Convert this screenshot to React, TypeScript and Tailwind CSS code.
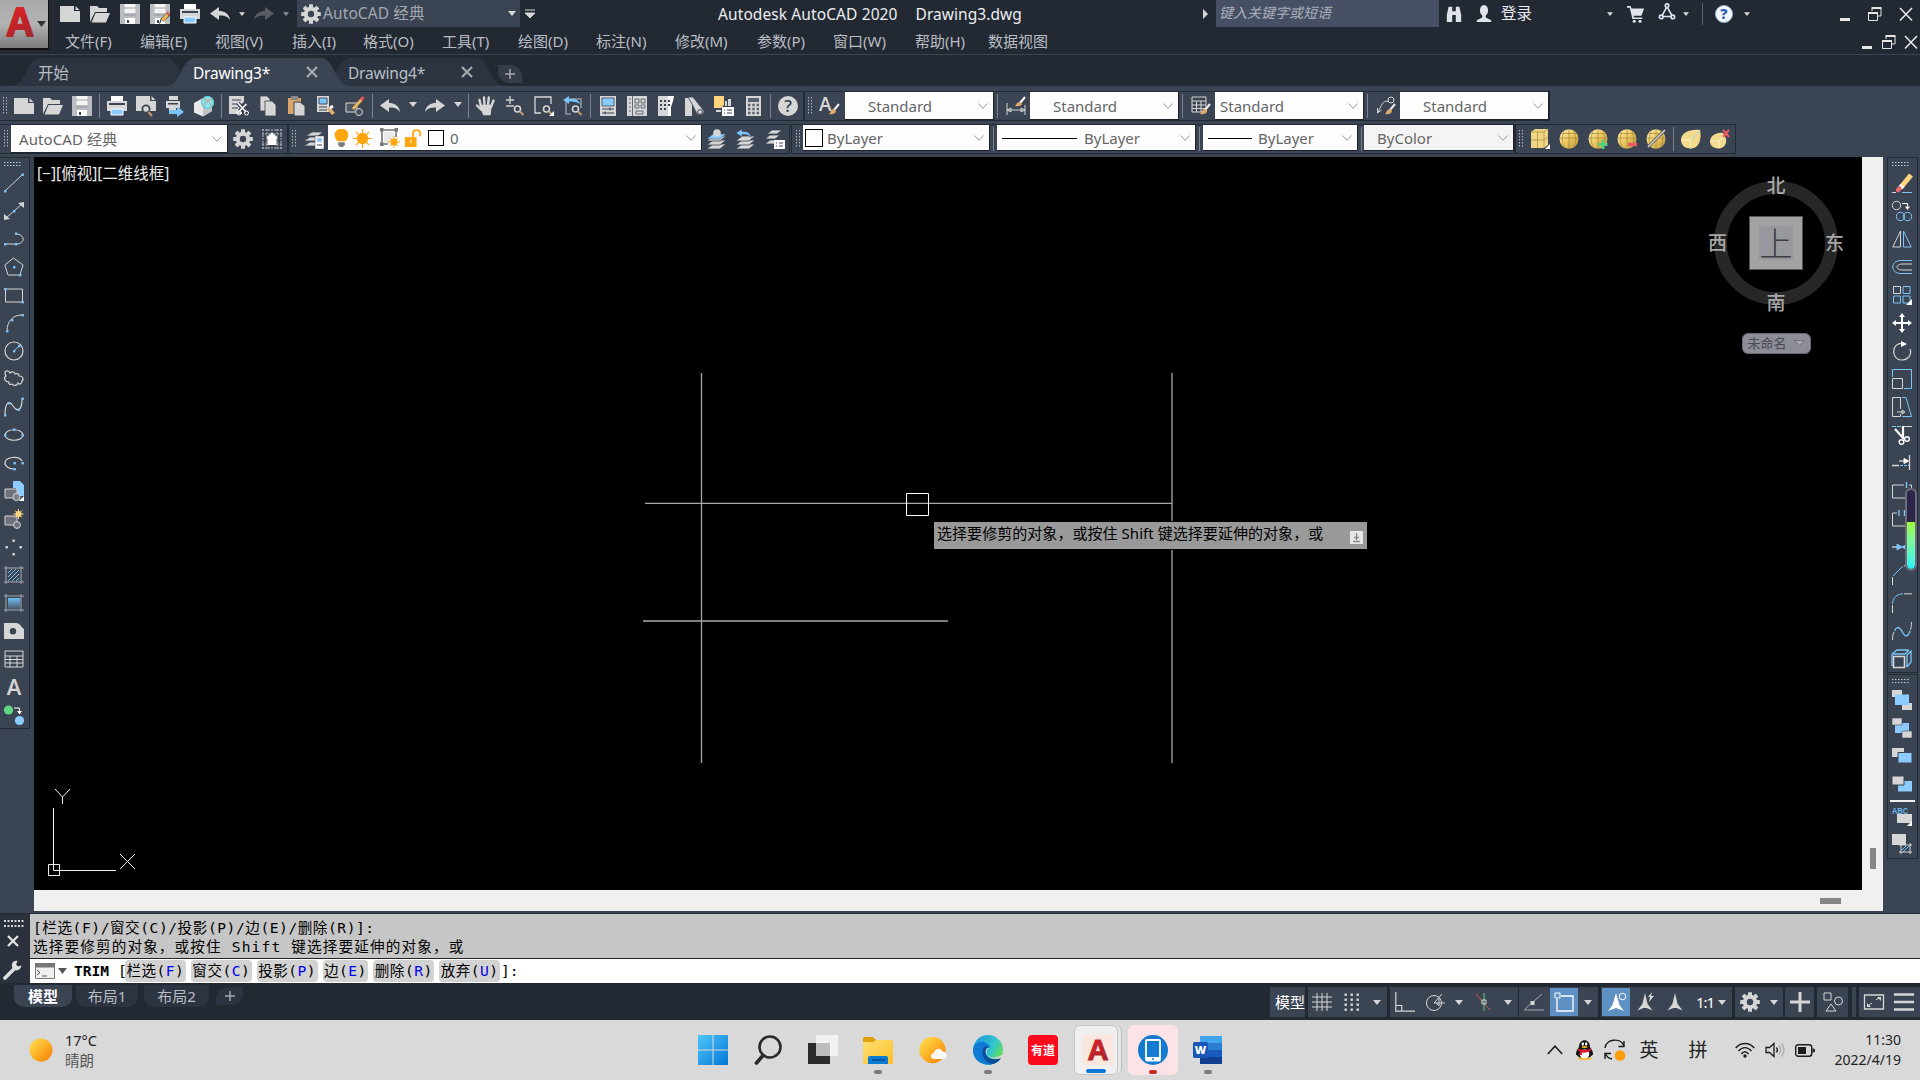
import type { ReactNode } from "react";
import clsx from "clsx";

const G = "#d6d6d6";
const B = "#7cc5fb";
const O = "#ffa60d";
const DARK = "#3b4453";

const dot = (x: number, y: number, c = B) => <rect x={x - 1} y={y - 1} width="2.4" height="2.4" fill={c} stroke="none" />;

const brush = (
  <g stroke="none">
    <path d="M19 8l-5 6" stroke="#eee" strokeWidth="2" />
    <path d="M14 13c-3 0-3 3-5 5 4 1 7-1 7-3z" fill="#e2a96b" />
  </g>
);

const gearTeeth = [0, 45, 90, 135, 180, 225, 270, 315];

const gear = (
  <g stroke="none" fill={G}>
    {gearTeeth.map((a) => (
      <rect key={a} x="8" y="0.2" width="4" height="5" rx="0.6" transform={`rotate(${a} 10 10)`} />
    ))}
    <circle cx="10" cy="10" r="5.2" fill="none" stroke={G} strokeWidth="4" />
  </g>
);

const globe = (
  <g>
    <ellipse cx="10" cy="10" rx="9.5" ry="9.8" fill="url(#gold)" stroke="none" />
    <path d="M10 .5v19M1 9h18M5 2.500c-2.500 5-2.500 10 0 15M15 2.500c2.500 5 2.500 10 0 15M3 4.500h14" stroke="#9a7c2c" strokeWidth="0.6" />
  </g>
);

const layers = (
  <g fill={G} stroke={DARK} strokeWidth="0.8">
    <path d="M0 20h13l6-5H6z" />
    <path d="M0 16h13l6-5H6z" />
    <path d="M0 12h13l6-5H6z" />
  </g>
);

const person = <path d="M10 1l3.500 12 4.500 6-8-3-8 3 4.500-6z" fill="#fff" stroke="none" />;

const annoBody = <path d="M10 1l2.600 11 5 6.500-6-2.500h-3.200l-6 2.500 5-6.500z" fill={G} stroke="none" />;

const printer = (
  <g stroke="none">
    <path d="M4 0h12v6H4z" fill="#fff" />
    <path d="M0 5h20v10H0z" fill={G} />
    <path d="M2 7h16v2H2z" fill={DARK} />
    <path d="M4 13h12v6H4z" fill="#8bcbff" stroke="#fff" />
  </g>
);

const floppy = (
  <g stroke="none">
    <path d="M0 0h20v20H0z" fill="#b9bcc0" />
    <path d="M4.500 0h11v9h-11z" fill="#f4f4f4" />
    <path d="M4 4h12M4 11h12" stroke="#8d9197" strokeWidth="0.8" />
    <path d="M5 14h10v6H5z" fill="#fff" />
    <path d="M7 16h2v3H7z" fill={DARK} />
  </g>
);

const zoomLens = (
  <g>
    <circle cx="12.500" cy="13" r="3" strokeWidth="1.600" />
    <path d="M15 15.500l3.500 3.500" stroke="#c89b6a" strokeWidth="2" />
  </g>
);

const hatchFrame = <path d="M2 1v18M17 1v18M0 3h20M0 17h20" stroke="#a6aab0" />;

const icons: Record<string, ReactNode> = {
  new: <path d="M0 2h14v5h6v11H0zM15.500 2l4 4h-4z" fill={G} stroke="none" />,
  open: <path d="M0 18V2h7l2 2h8v4H5zM5.500 9H20l-4 9.500H1.500z" fill={G} stroke="none" />,
  save: floppy,
  saveAs: (
    <g>
      {floppy}
      <path d="M9 20l1.500-5 7-7 3 3-7 7z" fill={DARK} stroke="none" />
      <path d="M10 20l1.500-4 3 2.500z" fill="#fff" stroke="none" />
      <path d="M12.500 16.500l5-6" stroke="#f0b44e" strokeWidth="3.500" />
      <path d="M17.500 10.500l1.500-1.600" stroke="#e0525c" strokeWidth="3.500" />
    </g>
  ),
  print: printer,
  preview: (
    <g>
      <path d="M0 0h14v5h6v10H0zM15.500 0l4 4h-4z" fill={G} stroke="none" />
      <circle cx="10" cy="13" r="3.600" fill={G} stroke={DARK} strokeWidth="1.800" />
      <path d="M12.500 16l3.500 4" stroke="#c89b6a" strokeWidth="2" />
    </g>
  ),
  publish: (
    <g stroke="none">
      <path d="M4 0h9v4H4zM1 5h14v7H1zM4 12h7v4H4z" fill={G} />
      <path d="M3 7h10v1.500H3z" fill={DARK} />
      <path d="M4 14h8v-3.500l7 5.500-7 5v-3H4z" fill="#7cc5fb" />
    </g>
  ),
  print3d: (
    <g stroke="none">
      <path d="M0 7l9-5 9 4v9l-9 5.500-9-4z" fill="#e9e9e9" />
      <path d="M9 11l9-5v9l-9 5.500z" fill="#bfc3c6" />
      <circle cx="13.500" cy="6.500" r="6.500" fill="#7fe6ec" />
      <path d="M8.500 3c5 0 9 4 9 9M18.500 3c-5 1-9 5-9 9" stroke="#f08a7a" />
      <circle cx="13.500" cy="6.500" r="6" stroke="#5bc7d0" fill="none" />
    </g>
  ),
  cut: (
    <g>
      <path d="M0 0h15v6l-5 4 3 4v4H0z" fill={G} stroke="none" />
      <path d="M3 4h9M3 8h6M3 12h6" stroke={DARK} />
      <path d="M9 7l8 9M17.500 8l-7 7" stroke={DARK} strokeWidth="4" />
      <path d="M9 7l8 9M17.500 8l-7 7" stroke="#fff" strokeWidth="1.500" />
      <circle cx="10" cy="17" r="2" stroke="#fff" />
      <circle cx="17.500" cy="17" r="2" stroke="#fff" />
    </g>
  ),
  copy: (
    <g fill={G} stroke={DARK} strokeWidth="0.800">
      <path d="M2 0h7l3 3v12H2z" />
      <path d="M7 5h7l4 4v11H7z" />
    </g>
  ),
  paste: (
    <g stroke="none">
      <path d="M1 2h13v16H1z" fill="#d9a566" />
      <path d="M4 0h7v4H4z" fill="#8a8a8a" />
      <path d="M7 6h6l5 4v10H7z" fill={G} stroke={DARK} />
    </g>
  ),
  match: (
    <g stroke="none">
      <path d="M1 0h12v16H1z" fill={G} />
      <path d="M3 2h8v6H3z" fill={B} stroke="#334" strokeWidth="0.800" />
      <path d="M3 11h8M3 14h8" stroke={DARK} />
      <path d="M11 13l3-2 5 6-3 2z" fill="#e5b36d" />
      <path d="M14 12l3-2" stroke="#fff" strokeWidth="3" />
    </g>
  ),
  blockEdit: (
    <g>
      <path d="M1 7h11v9H1z" fill="#4f5663" />
      <circle cx="14" cy="16" r="3.500" fill="#4a515e" />
      <path d="M8 13l9-10" stroke="#e9b55f" strokeWidth="3" />
      <path d="M16 4l2.500-3" stroke="#e0525c" strokeWidth="3" />
    </g>
  ),
  undo: <path d="M0 9.500L9 3v4c5 0 10 2 11 9-3-4-6-4.500-11-4.500V16z" fill={G} stroke="none" />,
  redo: <path d="M20 9.500L11 3v4C6 7 1 9 0 16c3-4 6-4.500 11-4.500V16z" fill={G} stroke="none" />,
  pan: (
    <g stroke={G} strokeWidth="2.400" strokeLinecap="round">
      <path d="M5 10L3.500 4M8.500 9L8 1.500M12 9l.8-7.500M15 11l2.500-6.500M5.500 14L1 9.500" />
      <path d="M5 10h9.500l-1 8H8z" fill={G} />
    </g>
  ),
  zoomRt: (
    <g>
      <path d="M1 4h8M5 0v8M1 10h8" strokeWidth="1.300" />
      {zoomLens}
    </g>
  ),
  zoomWin: (
    <g>
      <path d="M17 8V1H1v16h6" strokeWidth="1.300" />
      {zoomLens}
      <path d="M20 15v5h-5z" fill="#fff" stroke="none" />
    </g>
  ),
  zoomPrev: (
    <g>
      <path d="M3 6v12h5M9 3h9v9" stroke="#8f949c" strokeWidth="1.600" />
      <path d="M0 4l6-4v2.500c6 0 10 1 11 6-3-3-6-3-11-3V8z" fill={B} stroke="none" />
      {zoomLens}
    </g>
  ),
  props: (
    <g stroke="none">
      <path d="M2 0h16v20H2z" fill={G} />
      <path d="M4 2h12v8H4z" fill="#8bcbff" stroke="#3b4453" strokeWidth="0.800" />
      <path d="M4 13h12M4 17h12M12 11.500v3M7 15.500v3" stroke={DARK} />
    </g>
  ),
  design: (
    <g>
      <path d="M0 0h20v20H0z" fill={G} stroke="none" />
      <path d="M5.500 0v20M2 3h2M2 7h2M2 11h2M2 15h2M8 3h4v4H8zM14 3h4v4h-4zM8 9h4v3H8zM14 9h4v3h-4zM9 15h7v3H9z" stroke="#5a6270" strokeWidth="0.900" />
    </g>
  ),
  palettes: (
    <g stroke="none">
      <path d="M2 0h10v20H2z" fill={G} />
      <path d="M12 0h6l-1 5-2 6v9h-3z" fill="#fff" />
      <path d="M4 4h2v2H4zM8 4h2v2H8zM4 8h2v2H4zM8 8h2v2H8zM4 12h2v2H4zM8 12h2v2H8zM12 4h2v2h-2zM12 8h2v2h-2z" fill={DARK} />
    </g>
  ),
  sheet: (
    <g stroke="none">
      <path d="M0 2h7v18H0z" fill={G} />
      <path d="M3 1h5l11 14c0 4-5 5-7 3L7 8z" fill={G} stroke={DARK} strokeWidth="0.800" />
      <circle cx="15" cy="16" r="2.400" stroke={DARK} />
    </g>
  ),
  markup: (
    <g stroke="none">
      <path d="M0 0h10v9l-3 3H0z" fill="#ffd57e" />
      <path d="M11 5h2v5h-2zM14 3h3v7h-3z" fill={G} />
      <path d="M8 11h12v9H8z" fill="#fff" />
      <path d="M10 14h1M10 17h1M13 14h5M13 17h5" stroke={DARK} />
      <path d="M2 14h5v2H2z" fill={G} />
    </g>
  ),
  calc: (
    <g stroke="none">
      <path d="M3 0h15v20H3z" fill={G} />
      <path d="M5 2h11v4H5z" fill="#5a6270" />
      <path d="M5 9h11M5 13h11M5 17h11" stroke="#5a6270" strokeWidth="2.500" strokeDasharray="2.400 1.900" />
    </g>
  ),
  help: (
    <g>
      <circle cx="10" cy="10" r="10" fill={G} stroke="none" />
      <text x="10" y="16" textAnchor="middle" fontSize="17" fontFamily="Open Sans, sans-serif" fontWeight="600" fill={DARK} stroke="none">?</text>
    </g>
  ),
  textStyle: (
    <g>
      <text x="-1" y="15" fontSize="19" fontFamily="Open Sans, sans-serif" fontWeight="600" fill={G} stroke="none">A</text>
      {brush}
    </g>
  ),
  dimStyle: (
    <g>
      <path d="M1 7v12M19 9v10M1 14h18M1 14l4-2v4zM19 14l-4-2v4z" />
      <path d="M19 1l-5 6" stroke="#fff" strokeWidth="2" />
      <path d="M14 6c-3 0-4 3-5 4 4 1 7-1 7-2z" fill="#e2a96b" stroke="none" />
    </g>
  ),
  tableStyle: (
    <g>
      <path d="M1 1h14v15H1zM1 5h14M1 9h14M1 12.500h14M5.500 5v11M10 5v11" />
      {brush}
    </g>
  ),
  leaderStyle: (
    <g>
      <circle cx="15" cy="4" r="3" />
      <path d="M12 5c-6 0-6 4-10 11M1.500 17v-5M1.500 17l4-3" />
      {brush}
    </g>
  ),
  gear,
  wsGrid: (
    <g>
      <path d="M1 0v20M5 0v20M15 0v20M19 0v20M0 1h20M0 5h20M0 15h20M0 19h20" stroke="#b4b8be" strokeDasharray="2 1" />
      <path d="M10 3l6 6h-1.500v7h-9V9H4z" fill="#fff" stroke="none" />
    </g>
  ),
  layerProps: (
    <g>
      <g fill={G} stroke={DARK} strokeWidth="0.800">
        <path d="M0 17h12l5-4H6zM0 12h12l5-4H6zM2 7h12l5-4H8z" />
      </g>
      <path d="M11 7h9v13h-9z" fill="#fff" stroke={DARK} strokeWidth="0.500" />
      <path d="M13 9h5v4h-5z" fill={B} />
      <path d="M13 16h5" stroke={DARK} />
    </g>
  ),
  bulb: (
    <g stroke="none">
      <path d="M10 0c9 0 8.500 9 4 13H6C1.500 9 1 0 10 0z" fill={O} />
      <path d="M6.500 14h7v3l-2 2h-3l-2-2z" fill="#7d7d7d" />
    </g>
  ),
  sun: (
    <g>
      <circle cx="10" cy="10" r="6" fill={O} stroke="none" />
      <path d="M10 0v20M0 10h20M3 3l14 14M17 3L3 17" stroke={O} strokeWidth="1.300" />
    </g>
  ),
  vpFreeze: (
    <g>
      <path d="M2 2h14v7M2 2v14h6" stroke="#777" strokeWidth="1.600" />
      <path d="M0 0h3.500v3.500H0zM14.500 0H18v3.500h-3.500zM0 14.500h3.500V18H0z" fill="#777" stroke="none" />
      <path d="M4 4h10v5l-6 6H4z" fill="#e8e8e8" stroke="none" />
      <circle cx="14" cy="14" r="3.500" fill={O} stroke="none" />
      <path d="M14 8v12M8 14h12M10 10l8 8M18 10l-8 8" stroke={O} />
    </g>
  ),
  unlock: (
    <g>
      <path d="M10 9V5c0-5 8-5 8 0v3" stroke={O} strokeWidth="2" />
      <path d="M1 9h13v11H1z" fill={O} stroke="none" />
      <path d="M7.500 12v4" stroke="#fff" />
    </g>
  ),
  layerCurrent: (
    <g>
      {layers}
      <path d="M0 10h13l6-5H6z" fill="#8bcbff" stroke={DARK} strokeWidth="0.500" />
      <circle cx="10" cy="4" r="3.800" fill={G} stroke="none" />
    </g>
  ),
  layerPrev: (
    <g>
      {layers}
      <path d="M0 4l6-4v2.500c6 0 8 1 9 6-3-3-4-3-9-3V8z" fill={B} stroke={DARK} strokeWidth="0.500" />
    </g>
  ),
  layerState: (
    <g>
      <g fill={G} stroke={DARK} strokeWidth="0.800">
        <path d="M0 15h10l5-4H5zM0 10h10l5-4H5zM2 5h10l5-4H7z" />
      </g>
      <path d="M9 11h11v9H9z" fill="#fff" stroke="none" />
      <path d="M11 14h1M11 17h1M14 14h4M14 17h4" stroke={DARK} />
    </g>
  ),
  goldBox: (
    <g>
      <path d="M1 3l4-3h13v16l-4 3H1z" fill="#efd684" stroke="none" />
      <path d="M1 3h13l4-3M14 3v16M7.500 3v16M1 11h13l4-3" stroke="#a98a3c" strokeWidth="0.700" />
      <path d="M20 15v5h-5z" fill="#fff" stroke="none" />
    </g>
  ),
  goldGlobe: globe,
  goldPlus: (
    <g>
      {globe}
      <path d="M15 11v9M10.500 15.500h9" stroke="#4fd07c" strokeWidth="2.800" />
    </g>
  ),
  goldMinus: (
    <g>
      {globe}
      <path d="M11 15.500h9" stroke="#ee5c63" strokeWidth="3.400" />
    </g>
  ),
  goldSlash: (
    <g>
      {globe}
      <path d="M2 18L19 1" stroke="#555" strokeWidth="3" />
      <path d="M2 18L19 1" stroke="#cfcfcf" strokeWidth="1.400" />
    </g>
  ),
  goldCut: (
    <g>
      <path d="M0 11C0 4 8 0 19 1c2 9-1 18.500-9 18.500C4 19.500 0 16 0 11z" fill="#f3da8c" stroke="none" />
      <path d="M9.500 11L19 1M9.500 11v8.500M0 11h9.500" stroke="#fdf3cd" />
      <path d="M10 11l9-9.500" stroke="#7fc4d8" strokeWidth="0.700" />
    </g>
  ),
  goldCutX: (
    <g>
      <path d="M0 12.500C0 7 6 3 13 4c7 9 1 15.500-4 15.500C4 19.500 0 17 0 12.500z" fill="#f3da8c" stroke="none" />
      <path d="M0 12h9l5-6M9 12v7" stroke="#fdf3cd" />
      <path d="M13 1l6 7M19 1l-6 7" stroke="#ee5c63" strokeWidth="2" />
    </g>
  ),

  // draw
  line: <g><path d="M1.500 17.500L18 2" />{dot(1, 18)}{dot(18.500, 1.500)}</g>,
  xline: <g><path d="M2 17L18 3" /><path d="M0 19v-6l6 5zM20 1v6l-6-5z" fill={G} stroke="none" />{dot(10, 10)}</g>,
  pline: <g><path d="M1 15h11c10 0 9-10 0-10" />{dot(1, 15)}{dot(12, 15)}{dot(12, 4.500)}</g>,
  polygon: <g><path d="M9.500 1L19 8l-3 10H4L.8 8z" />{dot(10, 10)}{dot(16, 18)}</g>,
  rect: <g><path d="M1.500 4h17v13h-17z" />{dot(1, 4)}{dot(18.500, 17)}</g>,
  arc: <g><path d="M3 18C3 8 9 2 18 2" />{dot(3, 18)}{dot(8, 7)}{dot(18.500, 2)}</g>,
  circle: <g><circle cx="10" cy="10" r="9" strokeWidth="1.200" /><path d="M10 10l5-5" stroke={B} />{dot(10, 10)}{dot(15, 5)}</g>,
  cloud: <path d="M1 3c2-2 4-1 5 1 2-2 5-1 5 1 3-1 4 0 4 2 4 0 5 3 3 5 0 3-3 4-4 2-1 3-5 3-6 1-2 1-4 0-3-2-4 0-6-4-3-6-1-1-1-2-1-4z" strokeWidth="1.200" />,
  spline: <g><path d="M1 18C1 8 4 1 9 9c5 7 9 4 9-7" strokeWidth="1.200" />{dot(1, 18)}{dot(5, 6)}{dot(14.500, 12.500)}{dot(18.500, 1.500)}</g>,
  ellipse: <g><ellipse cx="10" cy="10" rx="9" ry="5.200" strokeWidth="1.100" />{dot(10, 4.500)}{dot(1, 10)}{dot(18.500, 10)}</g>,
  ellipseArc: <g><path d="M18 8c-3-6-17-4-17 2 0 4 5 6 9 6" strokeWidth="1.200" />{dot(10.500, 10)}{dot(18.500, 10)}{dot(10.500, 16)}</g>,
  insert: (
    <g>
      <path d="M9 0h7l4 4v11h-8V7H9z" fill="#8bcbff" stroke="none" />
      <path d="M1 8h12v9H1z" fill="#6d717b" />
      <circle cx="12.500" cy="16" r="3.600" fill="#7d818b" />
      <path d="M20 15v5h-5z" fill="#fff" stroke="none" />
    </g>
  ),
  block: (
    <g>
      <path d="M1 7h12v9H1z" fill="#6d717b" />
      <circle cx="13" cy="16" r="3.400" fill="#6d717b" />
      <circle cx="14.500" cy="5" r="3" fill="#ffd57e" stroke="none" />
      <path d="M14.500 0v10M9.500 5h10M11 1.500l7 7M18 1.500l-7 7" stroke="#ffd57e" />
    </g>
  ),
  point: <g>{dot(9.500, 3.500, G)}{dot(2.500, 10, G)}{dot(16.500, 10, G)}{dot(9.500, 17, G)}</g>,
  hatch: <g>{hatchFrame}<path d="M4 8l4-4M4 12l8-8M4 16L15 5M8 16l7-7M12 16l3-3" stroke={B} /></g>,
  gradient: <g>{hatchFrame}<path d="M4 5h12v11H4z" fill="url(#fade)" stroke="none" /></g>,
  region: <path fillRule="evenodd" d="M0 2h12c4 0 5 4 8 6v10H0zM9 7a3.200 3.200 0 100 6.400A3.200 3.200 0 009 7z" fill={G} stroke="none" />,
  table: <path d="M1 2h18v16H1zM1 7h18M1 10.500h18M1 14h18M6 7v11M13 7v11" />,
  mtext: <text x="10" y="18" textAnchor="middle" fontSize="22" fontFamily="Open Sans, sans-serif" fontWeight="600" fill={G} stroke="none">A</text>,
  addSel: (
    <g>
      <circle cx="4.500" cy="5" r="4.600" fill="#5fd884" stroke="none" />
      <circle cx="15.500" cy="15.500" r="4.600" fill="#8bcbff" stroke="none" />
      <path d="M10 3h5.500v3" stroke="#fff" />
      <path d="M13 6h5l-2.500 3.500z" stroke="none" fill="#fff" />
    </g>
  ),

  // modify
  erase: (
    <g>
      <path d="M0 19.500h4" /><path d="M10 19.500h10" stroke={B} />
      <path d="M10 13L19 2" stroke="#ffd57e" strokeWidth="5" />
      <path d="M8 15l2.500-2.500" stroke="#fff" strokeWidth="5" />
      <path d="M6 17l1.500-1.500" stroke="#ee6a72" strokeWidth="4.500" strokeLinecap="round" />
    </g>
  ),
  copyObj: (
    <g>
      <circle cx="4.500" cy="4.500" r="4.200" />
      <path d="M10 2.500h5.500v3" stroke="#fff" />
      <path d="M13 5.500h5l-2.500 3.500z" stroke="none" fill="#fff" />
      <circle cx="8.500" cy="15.500" r="4.200" stroke={B} />
      <circle cx="15.500" cy="15.500" r="4.200" stroke={B} />
    </g>
  ),
  mirror: <g><path d="M8.500 2v16H.8z" /><path d="M11.500 2v16h7.700z" stroke={B} /></g>,
  offset: <g><path d="M20 3.500H9c-11 0-11 13 0 13h11" stroke={B} /><path d="M20 7h-9c-8 0-8 6 0 6h9" /></g>,
  array: (
    <g>
      <path d="M1.500 1.500h7v7h-7z" />
      <path d="M11 1.500h7v7h-7zM1.500 11h7v7h-7zM11 11h7v7h-7z" stroke={B} />
      <path d="M20 14v6h-6z" fill="#fff" stroke="none" />
    </g>
  ),
  move: (
    <g stroke="#fff" strokeWidth="2">
      <path d="M10 2v16M2 10h16" />
      <path d="M10 0l3 4H7zM10 20l3-4H7zM0 10l4-3v6zM20 10l-4-3v6z" fill="#fff" stroke="none" />
    </g>
  ),
  rotate: <g><path d="M11 2.500C-1 1-1 18.500 9 19c8 0 11-6 9-11" strokeWidth="1.200" /><path d="M9 0l6 3-6 3z" fill="#fff" stroke="none" /></g>,
  scale: <g><path d="M.5 8V.5h19v19H12" stroke={B} /><path d="M.5 9.500h10v10H.5z" /></g>,
  stretch: <g><path d="M8.500 12V.5h-8v19h8V17M5 15h7M10 13l3 2-3 2z" /><path d="M10 .5h4l5.500 19H10" stroke={B} /></g>,
  trim: (
    <g>
      <path d="M0 1.500h9" stroke={B} strokeDasharray="4 1" /><path d="M12 1.500h8" />
      <path d="M3 4l9 10M11 1v11" stroke="#fff" strokeWidth="2.200" />
      <circle cx="9.500" cy="17" r="2.300" stroke="#fff" strokeWidth="1.400" />
      <circle cx="15" cy="14" r="2.300" stroke="#fff" strokeWidth="1.400" />
    </g>
  ),
  extend: (
    <g>
      <path d="M0 12.500h7M17.500 2v15" strokeWidth="1.300" /><path d="M8 12.500h9" stroke={B} strokeDasharray="3 1" />
      <path d="M7 8h6M12 5.500l4.500 2.500L12 10.500z" stroke="#fff" fill="#fff" />
    </g>
  ),
  breakPt: <g><path d="M12 4H.5v13h19V4H17" /><path d="M14.500 1v6" stroke={B} strokeWidth="1.400" /></g>,
  breakObj: <g><path d="M5 4H.5v13h19V4H15" /><path d="M7 1v6M12.500 1v6" stroke={B} strokeWidth="1.400" /></g>,
  join: <g><path d="M0 10h5M16 10h4" stroke="#fff" /><path d="M5 7l5 3-5 3zM15 7l-5 3 5 3z" fill={B} stroke={B} /></g>,
  chamfer: <g><path d="M.5 20v-8M12 .8h8" /><path d="M1 11L11 1" stroke={B} /></g>,
  fillet: <g><path d="M.5 20v-8M12 .8h8" /><path d="M.5 11C.5 5 5 .8 11 .8" stroke={B} /></g>,
  blend: <g><path d="M.5 19C.5 15 1 13 2 11M19.500 1c0 4-.5 6-1 8" /><path d="M2.500 10C6 3 9 8 11 12c2 4 5 4 7-2" stroke={B} strokeWidth="1.300" /></g>,
  explode: <g><path d="M1.500 7.500h11v11h-11z" strokeWidth="1.600" /><path d="M0 17V5l5-4h11M1 5h12l4-4M15 18V6l4-4v11l-4 5" stroke={B} strokeWidth="1.300" /></g>,
  front: <g stroke="none"><path d="M0 0h10v7H0zM10 13h10v7H10z" fill={G} /><path d="M3 4.500h14v10.500H3z" fill="#8bcbff" /></g>,
  back: <g stroke="none"><path d="M3 5h14v10H3z" fill="#8bcbff" /><path d="M0 0h10v7H0zM10 13h10v7H10z" fill={G} stroke={DARK} strokeWidth="0.600" /></g>,
  above: <g stroke="none"><path d="M0 2h12v9H0z" fill={G} /><path d="M6 6.500h14v10.500H6z" fill="#8bcbff" stroke={DARK} /></g>,
  under: <g stroke="none"><path d="M6 7h14v10.500H6z" fill="#8bcbff" /><path d="M0 2h12v9H0z" fill={G} stroke={DARK} /></g>,
  textFront: (
    <g stroke="none">
      <path d="M5 8h15v9H5z" fill={G} />
      <text x="0" y="8" textLength="16" lengthAdjust="spacingAndGlyphs" fontSize="9" fontFamily="Liberation Sans, sans-serif" fontWeight="700" fill="#6fb9ee">ABC</text>
      <path d="M20 15v5h-5z" fill="#fff" />
    </g>
  ),
  hatchBack: (
    <g>
      <path d="M0 0h14v11H0z" fill={G} stroke="none" />
      <path d="M9 9v11M18 9v11M7 11h13M7 18h13" />
      <path d="M10 16l4-4M11 18l6-6" stroke={B} />
    </g>
  ),

  // title bar right
  binoculars: <g fill="#dfe3ea" stroke="none"><path d="M4 2h4v5h4V2h4l2 9v8h-6v-8H8v8H2v-8z" /></g>,
  user: <g fill="#dfe3ea" stroke="none"><ellipse cx="10" cy="6" rx="4.500" ry="6" /><path d="M8 11h4v3l6 3v2H2v-2l6-3z" /></g>,
  cart: <g fill="#dfe3ea" stroke="none"><path d="M0 1h4l1 3h14l-3 8H7l1 2h9v1.500H6L3 3H0z" /><circle cx="8" cy="18" r="1.700" /><circle cx="14.500" cy="18" r="1.700" /></g>,
  a360: <g stroke="#dfe3ea" strokeWidth="1.800"><path d="M10 4L4 15h12z" /><circle cx="10" cy="3" r="2" fill="#2b3a6b" /><circle cx="3.500" cy="15.500" r="2" fill="#2b3a6b" /><circle cx="16.500" cy="15.500" r="2" fill="#2b3a6b" /></g>,
  helpBlue: (
    <g>
      <circle cx="10" cy="10" r="9.500" fill="#f4f7fb" stroke="#9db1d0" />
      <text x="10" y="16" textAnchor="middle" fontSize="16" fontFamily="Open Sans, sans-serif" fontWeight="800" fill="#2d5fb4" stroke="none">?</text>
    </g>
  ),
  min: <path d="M5 14h10v3H5z" fill="#e6e6e6" stroke="none" />,
  restore: <g stroke="#e6e6e6"><path d="M7 7V4.500h9V12h-3" /><path d="M6.500 4h10" strokeWidth="2" /><path d="M3.500 9.500h9v7h-9z" /><path d="M3 9h10" strokeWidth="2" /></g>,
  close: <path d="M4 4l12 12.500M16 4L4 16.500" stroke="#e6e6e6" strokeWidth="1.600" />,

  // status bar
  grid: <path d="M5 1v18M10 1v18M15 1v18M0 5h20M0 10h20M0 15h20" />,
  snap: (
    <g stroke="none" fill={G}>
      {[3, 8, 13, 18].map((y) => [3, 9, 15].map((x) => <rect key={`${x}-${y}`} x={x - 0.500} y={y - 1.500} width="2.400" height="2.400" />))}
    </g>
  ),
  ortho: <path d="M.8 0v19.200H20M.8 13.500h6v6" strokeWidth="1.200" />,
  polar: <g><circle cx="9" cy="11" r="7.500" /><path d="M9 11h11M9 11l8-9M14 6v8l-3-3" /></g>,
  iso: <g><path d="M2 2l14 16" stroke="#d05b5b" /><path d="M10 1v18" stroke="#62c583" /><path d="M8 8h4v4H8z" /></g>,
  otrack: <g><path d="M0 18h20M1 17L18 2" stroke="#a6aab0" /><path d="M6.500 9h4v4h-4z" fill={G} stroke="none" /></g>,
  osnap: <g stroke="#fff"><path d="M3 7v12h16V4H7" strokeWidth="1.300" /><path d="M1 1h5v5H1z" /></g>,
  anno1: <g>{person}<circle cx="16.500" cy="4.500" r="3.300" stroke="#fff" /></g>,
  anno2: <g>{annoBody}<path d="M17 0l-4 5h2l-1 5 5-6h-3z" fill={G} stroke="none" /></g>,
  anno3: annoBody,
  plus: <path d="M10 0v20M0 10h20" strokeWidth="3" />,
  isolate: <g><path d="M1 1h7v7H1zM8 12l-5 7h10z" /><circle cx="15.500" cy="9" r="4" /></g>,
  full: <g><path d="M.5 3h19v14H.5z" strokeWidth="1.300" /><path d="M13 5h4v4zM3 15v-4l4 4z" fill={G} stroke="none" /><path d="M12 8l3-2M5 13l3-2" /></g>,
  menu: <path d="M0 2.500h20M0 10h20M0 17.500h20" strokeWidth="2.600" />,
};

function Icon({ name, size = 20, className }: { name: string; size?: number; className?: string }) {
  return (
    <svg width={size} height={size} viewBox="0 0 20 20" fill="none" stroke={G} className={clsx("shrink-0 overflow-visible", className)}>
      {icons[name]}
    </svg>
  );
}

function Caret({ className }: { className?: string }) {
  return (
    <svg width="8" height="5" viewBox="0 0 8 5" className={clsx("shrink-0", className)}>
      <path d="M0 0h8L4 5z" fill={G} />
    </svg>
  );
}

function Slot({ className, children }: { className?: string; children?: ReactNode }) {
  return <div className={clsx("flex shrink-0 items-center justify-center", className)}>{children}</div>;
}

function Grip({ className }: { className?: string }) {
  return (
    <Slot className={className}>
      <svg width="4" height="18" viewBox="0 0 4 18">
        <path d="M.5 0v18M3.500 0v18" stroke="#aeb3bb" strokeDasharray="1.500 1.500" />
      </svg>
    </Slot>
  );
}

function GripH() {
  return (
    <div className="flex h-[11px] shrink-0 items-center pl-1">
      <svg width="17" height="4" viewBox="0 0 17 4">
        <path d="M0 .5h17M0 3.500h17" stroke="#c3c7cd" strokeDasharray="1.500 1.500" />
      </svg>
    </div>
  );
}

function Sep({ className }: { className?: string }) {
  return (
    <Slot className={className}>
      <div className="h-[24px] w-px bg-[#7d838d]" />
    </Slot>
  );
}

function Tools({ names }: { names: string[] }) {
  return (
    <>
      {names.map((n, i) => {
        if (n === "|") return <Sep key={i} className="w-[6px]" />;
        if (n === "v") return <Slot key={i} className="w-4 pb-1 pl-px"><Caret /></Slot>;
        return <Slot key={i} className="w-[29px]"><Icon name={n} /></Slot>;
      })}
    </>
  );
}

function Select({ className, children }: { className?: string; children: ReactNode }) {
  return (
    <div className={clsx("flex shrink-0 items-center border-r border-b border-[#1c222b] pt-px pr-[5px] text-[15px] text-[#666]", className)}>
      {children}
      <svg width="10" height="6" viewBox="0 0 10 6" className="ml-auto shrink-0">
        <path d="M.5.5L5 5.300 9.500.5" fill="none" stroke="#999" />
      </svg>
    </div>
  );
}

const menus = [
  { label: "文件(F)", w: "w-[75px]" },
  { label: "编辑(E)", w: "w-[75px]" },
  { label: "视图(V)", w: "w-[77px]" },
  { label: "插入(I)", w: "w-[71px]" },
  { label: "格式(O)", w: "w-[79px]" },
  { label: "工具(T)", w: "w-[76px]" },
  { label: "绘图(D)", w: "w-[78px]" },
  { label: "标注(N)", w: "w-[79px]" },
  { label: "修改(M)", w: "w-[82px]" },
  { label: "参数(P)", w: "w-[76px]" },
  { label: "窗口(W)", w: "w-[82px]" },
  { label: "帮助(H)", w: "w-[73px]" },
  { label: "数据视图", w: "w-[80px]" },
];

function TitleBar() {
  return (
    <div className="flex h-[55px] border-b border-[#3b4453]">
      <div className="flex h-[50px] w-[49px] shrink-0 items-start border-r border-b-2 border-[#111] bg-linear-to-b from-[#a8a8a8] via-[#b4b4b4] to-[#7c7c7c] pl-1">
        <svg width="32" height="46" viewBox="0 0 32 46" className="overflow-visible">
          <text x="16" y="36.400" textAnchor="middle" textLength="28" lengthAdjust="spacingAndGlyphs" fontSize="40" fontWeight="700" fontFamily="Liberation Sans, sans-serif" fill="url(#red)" stroke="url(#red)" strokeWidth="1.800" strokeLinejoin="round">A</text>
        </svg>
        <svg width="9" height="6" viewBox="0 0 9 6" className="mt-[21px] ml-px shrink-0"><path d="M0 0h9L4.500 6z" fill="#333" /></svg>
      </div>
      <div className="flex flex-1 flex-col">
        <div className="flex h-[27px] items-center">
          <div className="flex pl-[6px]">
            {["new", "open", "save", "saveAs", "print", "undo"].map((n) => (
              <Slot key={n} className="w-[30px]"><Icon name={n} /></Slot>
            ))}
            <Slot className="w-[14px]"><Caret className="h-1 w-1.5" /></Slot>
            <Slot className="w-[30px]"><Icon name="redo" className="opacity-30" /></Slot>
            <Slot className="w-[14px]"><Caret className="h-1 w-1.5 opacity-60" /></Slot>
          </div>
          <div className="ml-[4px] flex h-full w-[223px] items-center bg-[#3b4453] pr-1 pl-[4px] text-[15.500px] text-[#a3a8b0]">
            <Icon name="gear" />
            <span className="ml-[2px] tracking-[0.100px] whitespace-nowrap">AutoCAD 经典</span>
            <Caret className="ml-auto" />
          </div>
          <svg width="10" height="9" viewBox="0 0 10 9" className="ml-[5px]"><path d="M0 1h10M0 4h10L5 9z" fill={G} stroke={G} strokeWidth="1" /></svg>
          <div className="ml-[183px] flex w-[481px] gap-[18px] pt-[3px] text-[15.500px] whitespace-nowrap text-[#eceef0]">
            <span className="tracking-[0.100px]">Autodesk AutoCAD 2020</span>
            <span className="tracking-[0.050px]">Drawing3.dwg</span>
          </div>
          <svg width="5" height="10" viewBox="0 0 5 10" className="ml-[4px]"><path d="M0 0v10l5-5z" fill={G} /></svg>
          <div className="ml-[8px] flex h-full w-[223px] items-center bg-[#464f63] pb-[3px] pl-[3px] text-[14px] text-[#a9afba] italic">键入关键字或短语</div>
          <Slot className="w-[30px]"><Icon name="binoculars" size={18} /></Slot>
          <Slot className="w-[29px]"><Icon name="user" size={18} /></Slot>
          <span className="ml-[3px] w-[106px] text-[15.500px] text-[#e8eaed]">登录</span>
          <Caret className="h-1 w-1.5" />
          <Slot className="ml-[6px] w-[34px]"><Icon name="cart" size={18} /></Slot>
          <Slot className="w-[27px]"><Icon name="a360" size={18} className="-mt-[3px]" /></Slot>
          <Caret className="ml-[3px] h-1 w-1.5" />
          <div className="ml-[13px] h-[22px] w-px bg-[#5b6270]" />
          <Slot className="ml-[5px] w-[32px]"><Icon name="helpBlue" size={18} /></Slot>
          <Caret className="ml-[4px] h-1 w-1.5" />
          <div className="-mr-px ml-auto flex items-center">
            <Slot className="w-[30px]"><Icon name="min" /></Slot>
            <Slot className="w-[30px]"><Icon name="restore" /></Slot>
            <Slot className="w-[31px]"><Icon name="close" /></Slot>
          </div>
        </div>
        <div className="flex h-[27px] items-center pt-[2px] pl-[16px] text-[15px] text-[#b9bdc3]">
          {menus.map((m) => (
            <span key={m.label} className={clsx("shrink-0 whitespace-nowrap", m.w)}>{m.label}</span>
          ))}
          <div className="-mr-[2px] ml-auto flex">
            <Slot className="w-[22px]"><Icon name="min" /></Slot>
            <Slot className="w-[22px]"><Icon name="restore" /></Slot>
            <Slot className="w-[22px]"><Icon name="close" /></Slot>
          </div>
        </div>
      </div>
    </div>
  );
}

function FileTab({ label, active, closable = true }: { label: string; active?: boolean; closable?: boolean }) {
  return (
    <div className={clsx("relative flex h-[28px] w-[155px] shrink-0 items-center justify-between pr-[17px] pl-[13px] text-[15.500px] tracking-[-0.200px]", active ? "z-10 text-white" : "text-[#b9bdc3]")}>
      <svg width="184" height="28" viewBox="-14 0 184 28" className="absolute top-0 -left-[14px]">
        <path d="M-14 28C2 28 0 0 16 0h124c16 0 14 28 30 28z" fill={active ? "#3b4453" : "#2d3441"} />
      </svg>
      <span className="relative pt-[3px]">{label}</span>
      {closable && (
        <svg width="12" height="12" viewBox="0 0 12 12" className="relative">
          <path d="M1 1l10 10M11 1L1 11" stroke="#a5aab2" strokeWidth="2.200" />
        </svg>
      )}
    </div>
  );
}

function FileTabs() {
  return (
    <div className="flex h-[31px] items-end pl-[25px]">
      <FileTab label="开始" closable={false} />
      <FileTab label="Drawing3*" active />
      <FileTab label="Drawing4*" />
      <div className="mb-[3px] ml-[8px] flex h-[18px] w-[24px] items-center justify-center rounded-tr-xl rounded-bl-xl bg-[#343c4a]">
        <Icon name="plus" size={10} className="opacity-70" />
      </div>
    </div>
  );
}

const box = "flex outline outline-[#232a35]";

function Toolbars() {
  return (
    <div className="flex h-[71px] flex-col bg-[#3b4453] pt-[6px]">
      <div className="flex h-[28px] gap-[2px]">
        <div className={clsx(box, "w-[803px]")}>
          <Grip className="w-[9px]" />
          <Tools
            names={[
              "new", "open", "save", "|", "print", "preview", "publish", "print3d", "|", "cut", "copy", "paste", "match", "blockEdit", "|",
              "undo", "v", "redo", "v", "|", "pan", "zoomRt", "zoomWin", "zoomPrev", "|",
              "props", "design", "palettes", "sheet", "markup", "calc", "|", "help",
            ]}
          />
        </div>
        <div className={clsx(box, "w-[744px]")}>
          <Grip className="w-[10px]" />
          <Tools names={["textStyle"]} />
          <Select className="ml-px w-[149px] bg-[#fdfdfd] pl-[23px]">Standard</Select>
          <Sep className="w-[7px]" />
          <Tools names={["dimStyle"]} />
          <Select className="w-[149px] bg-[#fdfdfd] pl-[23px]">Standard</Select>
          <Sep className="w-[7px]" />
          <Tools names={["tableStyle"]} />
          <Select className="w-[149px] bg-[#fdfdfd] pl-[5px]">Standard</Select>
          <Sep className="w-[7px]" />
          <Tools names={["leaderStyle"]} />
          <Select className="w-[149px] bg-[#fdfdfd] pl-[23px]">Standard</Select>
        </div>
      </div>
      <div className="mt-[5px] flex h-[28px]">
        <div className={clsx(box, "w-[287px]")}>
          <Grip className="w-[11px]" />
          <Select className="w-[217px] bg-[#fdfdfd] pl-[8px] tracking-[0.100px]">AutoCAD 经典</Select>
          <Tools names={["gear", "wsGrid"]} />
        </div>
        <div className={clsx(box, "ml-[2px] w-[500px]")}>
          <Grip className="w-[10px]" />
          <Tools names={["layerProps"]} />
          <Select className="h-[26px] w-[374px] bg-[#fdfdfd] pl-[4px]">
            <Icon name="bulb" size={19} />
            <Icon name="sun" size={19} className="ml-[2px]" />
            <Icon name="vpFreeze" className="ml-[8px]" />
            <Icon name="unlock" size={18} className="ml-[4px]" />
            <div className="ml-[6px] h-4 w-4 border border-black bg-white" />
            <span className="ml-[6px]">0</span>
          </Select>
          <Tools names={["layerCurrent", "layerPrev", "layerState"]} />
        </div>
        <div className={clsx(box, "ml-[3px] w-[722px]")}>
          <Grip className="w-[11px]" />
          <Select className="h-[26px] w-[187px] bg-[#fdfdfd] pl-[2px]">
            <div className="mr-[4px] h-[18px] w-[18px] border border-black bg-white" />
            ByLayer
          </Select>
          <Sep className="w-[7px]" />
          <Select className="h-[26px] w-[199px] bg-[#fdfdfd] pl-[5px]">
            <div className="mr-[7px] h-px w-[75px] bg-black" />
            ByLayer
          </Select>
          <Sep className="w-[7px]" />
          <Select className="h-[26px] w-[155px] bg-[#fdfdfd] pl-[5px]">
            <div className="mr-[6px] h-px w-[44px] bg-black" />
            ByLayer
          </Select>
          <Sep className="w-[6px]" />
          <Select className="h-[26px] w-[150px] bg-[#f4f4f4] pl-[13px]">ByColor</Select>
        </div>
        <div className={clsx(box, "ml-[2px] w-[219px]")}>
          <Grip className="w-[9px]" />
          <Tools names={["goldBox", "goldGlobe", "goldPlus", "goldMinus", "goldSlash", "|", "goldCut", "goldCutX"]} />
        </div>
      </div>
    </div>
  );
}

const drawTools = [
  "line", "xline", "pline", "polygon", "rect", "arc", "circle", "cloud", "spline", "ellipse", "ellipseArc",
  "insert", "block", "point", "hatch", "gradient", "region", "table", "mtext", "addSel",
];
const modifyTools = [
  "erase", "copyObj", "mirror", "offset", "array", "move", "rotate", "scale", "stretch", "trim", "extend",
  "breakPt", "breakObj", "join", "chamfer", "fillet", "blend", "explode",
];

function SideTools({ names }: { names: string[] }) {
  return (
    <>
      {names.map((n) => (
        <div key={n} className="flex h-7 shrink-0 items-center pl-1">
          <Icon name={n} />
        </div>
      ))}
    </>
  );
}

function ViewCube() {
  return (
    <div className="absolute top-[18px] right-[12px] flex w-[148px] flex-col items-center font-medium text-[#a8a8a8]">
      <svg width="124" height="124" viewBox="0 0 124 124" className="absolute top-[6px] left-[12px]">
        <circle cx="62" cy="62" r="55.500" fill="none" stroke="#272727" strokeWidth="13" />
      </svg>
      <span className="relative h-[22px] text-[19px] leading-[22px]">北</span>
      <div className="relative mt-[19px] flex w-full items-center justify-between px-[6px]">
        <span className="text-[19px] leading-none">西</span>
        <div className="flex h-[54px] w-[54px] items-center justify-center border border-[#555] bg-[#a3a3a3]">
          <span className="flex h-[34px] w-[34px] items-center justify-center bg-[#97989d] text-[33px] leading-none font-light text-[#3d3d42]">上</span>
        </div>
        <span className="text-[19px] leading-none">东</span>
      </div>
      <span className="relative mt-[22px] h-[22px] text-[19px] leading-[22px]">南</span>
      <div className="mt-[19px] flex h-[21px] w-[69px] items-center justify-between rounded-md border border-[#6d6a75] bg-[#8d8d97] px-[5px] text-[13px] font-normal text-[#4a4a52]">
        未命名
        <svg width="11" height="7" viewBox="0 0 11 7"><path d="M.5.5h10l-5 5.500z" fill="#a5a9b2" stroke="#6f6f78" /></svg>
      </div>
    </div>
  );
}

function Canvas() {
  return (
    <div className="relative h-[733px] w-[1828px] overflow-hidden bg-black">
      <svg width="1828" height="733" viewBox="34 157 1828 733" fill="none" stroke="#a8a8a8" strokeWidth="1.300" className="block">
        <path d="M701.500 373v390M1172 373v390M645 503.300h527M643 621h305" />
        <path d="M906.500 493.500h22v22h-22z" stroke="#fff" strokeWidth="1" />
        <g stroke="#f0f0f0" strokeWidth="1">
          <path d="M53.500 808v62.500H116M48.500 864.500h11v11h-11z" />
          <path d="M55 789l7.500 8 7.500-8M62.500 797v7M120 854l15 15M135 854l-15 15" />
        </g>
      </svg>
      <span className="absolute top-[5px] left-[3px] text-[15.500px] whitespace-nowrap text-[#e8e8e8]">[−][俯视][二维线框]</span>
      <ViewCube />
      <div className="absolute top-[364px] left-[899px] flex h-[29px] w-[435px] items-start justify-between border border-black bg-[#999] pr-[4px] pl-[3px] text-[15px] whitespace-nowrap text-black">
        <span className="tracking-[0.050px]">选择要修剪的对象，或按住 Shift 键选择要延伸的对象，或</span>
        <svg width="13" height="13" viewBox="0 0 13 13" className="mt-[9px]">
          <path d="M0 0h13v13H0z" fill="#e8e8e8" />
          <path d="M6.500 2v7M4 6.500h5M3 10.500h7" stroke="#888" strokeWidth="1.400" />
        </svg>
      </div>
    </div>
  );
}

function Workspace() {
  return (
    <div className="flex h-[756px] bg-[#3b4453]">
      <div className="w-[34px] shrink-0">
        <div className="flex h-[572px] w-[30px] flex-col border border-l-0 border-[#232a35]">
          <GripH />
          <SideTools names={drawTools} />
        </div>
      </div>
      <div className="flex h-[754px] flex-1 flex-col bg-[#f0f0f0]">
        <div className="flex">
          <Canvas />
          <div className="flex flex-1 flex-col items-center">
            <div className="mt-[691px] h-[21px] w-[6px] bg-[#868686]" />
          </div>
        </div>
        <div className="mt-[8px] ml-[1786px] h-[6px] w-[21px] bg-[#868686]" />
      </div>
      <div className="relative w-[37px] shrink-0 pl-[4px]">
        <div className="flex h-[516px] w-[31px] flex-col border border-[#232a35]">
          <GripH />
          <SideTools names={modifyTools} />
        </div>
        <div className="mt-px flex h-[185px] w-[31px] flex-col border border-[#232a35]">
          <GripH />
          <SideTools names={["front", "back", "above", "under"]} />
          <div className="mx-[2px] mt-[2px] h-[2px] shrink-0 bg-[#f0f0f0]" />
          <SideTools names={["textFront", "hatchBack"]} />
        </div>
        <div className="absolute top-[331px] right-[3px] flex h-[83px] w-[12px] flex-col overflow-hidden rounded-full border-2 border-[#6f6d7d] bg-[#2c2748]">
          <div className="mt-[32px] flex-1 rounded-b-full bg-linear-to-b from-[#9dfb30] to-[#22f3f6]" />
        </div>
      </div>
    </div>
  );
}

const options = [
  { label: "栏选", k: "F" },
  { label: "窗交", k: "C" },
  { label: "投影", k: "P" },
  { label: "边", k: "E" },
  { label: "删除", k: "R" },
  { label: "放弃", k: "U" },
];

function CommandLine() {
  return (
    <div className="flex h-[72px] border-t border-b-2 border-[#222933] bg-[#2b313d] font-['DejaVu_Sans_Mono','Noto_Sans_CJK_SC',monospace] text-[14.600px] text-black">
      <div className="flex w-[30px] shrink-0 flex-col pt-[6px]">
        <svg width="21" height="7" viewBox="0 0 21 7" className="ml-1">
          <path d="M0 1h21M0 6h21" stroke="#d6d6d6" strokeWidth="1.800" strokeDasharray="2 1.500" />
        </svg>
        <svg width="12" height="12" viewBox="0 0 12 12" className="mt-[8px] ml-[7px]">
          <path d="M1 1l10 10M11 1L1 11" stroke="#e6e6e6" strokeWidth="2.200" />
        </svg>
        <svg width="20" height="20" viewBox="0 0 20 20" className="mt-[13px] ml-[3px]">
          <path d="M2 18L12 8" stroke="#e0e0e0" strokeWidth="3.600" strokeLinecap="round" />
          <path d="M18.500 5.500l-3.500 1-2-2 1.500-3.500c-4-1-7 3-5 7s8 3 9-2.500z" fill="#e0e0e0" />
        </svg>
      </div>
      <div className="flex flex-1 flex-col">
        <div className="flex h-[45px] flex-col border-b border-[#222] bg-[#c6c6c6] pt-[4px] pl-[3px] leading-[19px] whitespace-nowrap">
          <span className="tracking-[0.550px]">[栏选(F)/窗交(C)/投影(P)/边(E)/删除(R)]:</span>
          <span className="tracking-[1.140px]">选择要修剪的对象，或按住 Shift 键选择要延伸的对象，或</span>
        </div>
        <div className="flex flex-1 items-center bg-white pl-[5px]">
          <svg width="20" height="16" viewBox="0 0 20 16">
            <path d="M.5.5h19v15H.5z" fill="#f0f0f0" stroke="#777" />
            <path d="M0 0h20v4.500H0z" fill="#777" />
            <path d="M2 7l3 2.500L2 12M7 13h5" fill="none" stroke="#555" />
          </svg>
          <svg width="9" height="6" viewBox="0 0 9 6" className="ml-[3px]"><path d="M0 0h9L4.500 6z" fill="#555" /></svg>
          <span className="ml-[7px] w-[45px] font-bold">TRIM</span>
          <span className="w-[6px] -translate-x-px">[</span>
          <div className="flex gap-[5px]">
            {options.map((o) => (
              <span key={o.k} className="flex h-[22px] items-center rounded-[4px] bg-[#d2d2d2] px-[1.500px] tracking-[0.450px]">
                {o.label}(<span className="text-[#0000f0]">{o.k}</span>)
              </span>
            ))}
          </div>
          <span className="ml-px">]:</span>
        </div>
      </div>
    </div>
  );
}

function LayoutTab({ label, active, className }: { label: string; active?: boolean; className?: string }) {
  return (
    <div
      className={clsx(
        "flex h-[22px] items-center justify-center rounded-b-[10px] text-[15px]",
        active ? "bg-[#3b4453] font-bold text-white" : "bg-[#2d3441] text-[#b9bdc3]",
        className,
      )}
    >
      {label}
    </div>
  );
}

const cell = "flex h-[30px] items-center bg-[#3b4453]";

function StatusBar() {
  return (
    <div className="flex h-[35px] bg-[#222933]">
      <div className="flex pl-[14px]">
        <LayoutTab label="模型" active className="w-[58px]" />
        <LayoutTab label="布局1" className="ml-[4px] w-[62px]" />
        <LayoutTab label="布局2" className="ml-[6px] w-[65px]" />
        <div className="mt-[2px] ml-[7px] flex h-[18px] w-[27px] items-center justify-center rounded-tl-xl rounded-br-xl bg-[#2d3441]">
          <Icon name="plus" size={10} className="opacity-70" />
        </div>
      </div>
      <div className="ml-auto flex pt-[2px] text-[15px] text-white">
        <div className={clsx(cell, "w-[35px] justify-end")}>模型</div>
        <div className={clsx(cell, "ml-[3px] w-[79px] pl-[4px]")}>
          <Icon name="grid" />
          <Icon name="snap" className="ml-[10px]" />
          <Caret className="ml-[11px]" />
        </div>
        <div className={clsx(cell, "ml-[3px] w-[128px] pl-[5px]")}>
          <Icon name="ortho" />
          <Icon name="polar" className="ml-[10px]" />
          <Caret className="ml-[10px]" />
          <Icon name="iso" className="ml-[11px]" />
          <Caret className="ml-[10px]" />
        </div>
        <div className={clsx(cell, "ml-px w-[79px] pl-[5px]")}>
          <Icon name="otrack" />
          <Slot className="ml-[6px] h-[28px] w-[28px] bg-[#5e90c3]"><Icon name="osnap" /></Slot>
          <Caret className="ml-[6px]" />
        </div>
        <div className={clsx(cell, "ml-[3px] w-[131px] pl-px")}>
          <Slot className="h-[28px] w-[28px] bg-[#5e90c3]"><Icon name="anno1" /></Slot>
          <Icon name="anno2" className="ml-[5px]" />
          <Icon name="anno3" className="ml-[10px]" />
          <span className="ml-[11px] w-[20px] text-[15px] tracking-[-1px]">1:1</span>
          <Caret className="ml-[2px]" />
        </div>
        <div className={clsx(cell, "ml-[3px] w-[48px] pl-[5px]")}>
          <Icon name="gear" />
          <Caret className="ml-[10px]" />
        </div>
        <div className={clsx(cell, "ml-[2px] w-[29px] justify-center")}><Icon name="plus" /></div>
        <div className={clsx(cell, "ml-[3px] w-[31px] justify-center")}><Icon name="isolate" /></div>
        <div className={clsx(cell, "ml-[4px] w-[4px]")} />
        <div className={clsx(cell, "ml-[3px] w-[61px] gap-[10px] pl-[5px]")}>
          <Icon name="full" />
          <Icon name="menu" />
        </div>
      </div>
    </div>
  );
}

const apps: { id: string; mark?: string; tile?: string; art: ReactNode }[] = [
  {
    id: "start",
    art: <path d="M0 0h14.500v14.500H0zM15.500 0H30v14.500H15.500zM0 15.500h14.500V30H0zM15.500 15.500H30V30H15.500z" fill="url(#win)" />,
  },
  {
    id: "search",
    art: (
      <g fill="none" stroke="#2a2a2a" strokeLinecap="round">
        <circle cx="17" cy="12" r="10.500" strokeWidth="2.600" />
        <path d="M10 20.500L3.500 28" strokeWidth="3.600" />
      </g>
    ),
  },
  {
    id: "taskview",
    art: (
      <g>
        <path d="M0 8h22v21H0z" fill="#2b2b2b" />
        <path d="M8 0h22v21H8z" fill="#f4f4f4" fillOpacity="0.920" />
        <path d="M8 8h14v13H8z" fill="#bcbcbc" />
      </g>
    ),
  },
  {
    id: "explorer",
    mark: "h-[4px] w-[8px] bg-[#7b7b7b]",
    art: (
      <g>
        <path d="M0 3q0-1 1-1h9l3 3h16v6H0z" fill="#e0a007" />
        <path d="M0 7h10l3-2h17v23q0 1-1 1H0z" fill="url(#folder)" />
        <path d="M5 29v-6q0-2 2-2h16q2 0 2 2v6z" fill="#0d7ad4" />
        <path d="M9 25h13" stroke="#0a4b8a" strokeWidth="1.400" />
      </g>
    ),
  },
  {
    id: "weather",
    art: (
      <g>
        <circle cx="14.500" cy="15" r="13.200" fill="url(#sunball)" />
        <path d="M16 24c-4-.5-4-5 0-6 1-5.500 7-5 8.500-1.500 5-.5 6 7 .5 7.500z" fill="#fafafa" />
      </g>
    ),
  },
  {
    id: "edge",
    mark: "h-[4px] w-[8px] bg-[#7b7b7b]",
    art: (
      <g>
        <circle cx="15" cy="15" r="15" fill="url(#edgeA)" />
        <path d="M0 15C1 7 8 5 13 8c4 2 4 4 4 5-3-2-5 1-5 5 1 5 8 8 16 5-4 6-11 8-17 6C4 27 0 22 0 15z" fill="#0f7ad6" />
        <path d="M11 12c-4 7 0 16 9 17 4-1 6-3 8-6-8 3-14 0-15-4-1-3 0-6 3-7-2-1-4-1-5 0z" fill="#0e4d98" />
        <path d="M17 13c-5-1-5 5-3 7 4 4 11 3 16-1l-1 4c-8 2-13 0-15-3-1-4 0-7 3-7z" fill="#d9d9d9" />
      </g>
    ),
  },
  {
    id: "youdao",
    art: (
      <g>
        <rect width="30" height="30" rx="4" fill="#fb0a1c" />
        <text x="15" y="19.500" textAnchor="middle" fontSize="12" fontWeight="700" fontFamily="Noto Sans CJK SC, sans-serif" fill="#fff">有道</text>
      </g>
    ),
  },
  {
    id: "autocad",
    tile: "border border-[#c4c4c4] bg-[#efefef] w-[44px] -ml-[4px] shadow-[4px_0_0_-1px_#e6e6e6,5px_0_0_-1px_#bdbdbd]",
    mark: "h-[4px] w-[20px] bg-[#0a78d4]",
    art: (
      <g>
        <path d="M2 0h30v30H2z" fill="#fbe6dd" />
        <text x="17" y="25" textAnchor="middle" textLength="21" lengthAdjust="spacingAndGlyphs" fontSize="30" fontWeight="700" fontFamily="Liberation Sans, sans-serif" fill="url(#red)" stroke="url(#red)">A</text>
      </g>
    ),
  },
  {
    id: "phone",
    tile: "bg-[#fce4e6] w-[50px]",
    mark: "h-[4px] w-[8px] bg-[#c42b1c]",
    art: (
      <g>
        <circle cx="15" cy="15" r="15" fill="#1479d0" />
        <rect x="8" y="5" width="14" height="20.500" rx="1" fill="none" stroke="#fff" strokeWidth="1.800" />
        <path d="M8 22h14v4H8z" fill="#fff" />
        <circle cx="15" cy="24" r="1" fill="#1479d0" />
      </g>
    ),
  },
  {
    id: "word",
    mark: "h-[4px] w-[8px] bg-[#7b7b7b]",
    art: (
      <g>
        <path d="M7 1h22v7H7z" fill="#41a5ee" />
        <path d="M7 8h22v7H7z" fill="#2b7cd3" />
        <path d="M7 15h22v7H7z" fill="#185abd" />
        <path d="M7 22h22v7H7z" fill="#103f91" />
        <rect y="7" width="15" height="16" rx="1.500" fill="#1a56b8" />
        <text x="7.500" y="19" textAnchor="middle" fontSize="11" fontWeight="800" fontFamily="Open Sans, sans-serif" fill="#fff">W</text>
      </g>
    ),
  },
];

function Taskbar() {
  return (
    <div className="flex h-[60px] items-center bg-[#d9d9d9] text-[#222]">
      <div className="flex w-[685px] shrink-0 items-center pl-[29px]">
        <svg width="24" height="24" viewBox="0 0 24 24"><circle cx="12" cy="12" r="11.500" fill="url(#sunball)" /></svg>
        <div className="ml-[12px] text-[14.500px] leading-[20px]">
          <div>17°C</div>
          <div className="text-[#555]">晴朗</div>
        </div>
      </div>
      {apps.map((a) => (
        <div key={a.id} className="flex w-[55px] shrink-0 justify-center">
          <div className={clsx("relative flex h-[50px] items-center justify-center rounded-md", a.tile ?? "w-[50px]")}>
            <svg width="30" height="30" viewBox="0 0 30 30" className="shrink-0 overflow-visible">{a.art}</svg>
            {a.mark && <div className={clsx("absolute bottom-[1px] rounded-full", a.mark)} />}
          </div>
        </div>
      ))}
      <div className="ml-auto flex items-center pr-[19px]">
        <Slot className="w-[30px]">
          <svg width="16" height="10" viewBox="0 0 16 10"><path d="M.8 9L8 1.200 15.200 9" fill="none" stroke="#1c1c1c" strokeWidth="1.500" /></svg>
        </Slot>
        <Slot className="w-[30px]">
          <svg width="17" height="20" viewBox="0 0 17 20">
            <ellipse cx="8.500" cy="18.500" rx="7" ry="1.500" fill="#f6b21b" />
            <path d="M3 7C3-2 14-2 14 7c3 4 4 8 2 8-1 4-14 4-15 0-2 0-1-4 2-8z" fill="#151515" />
            <ellipse cx="8.500" cy="14" rx="4.800" ry="4.500" fill="#fff" />
            <path d="M2 8.500q6.500 3 13 0v2.500q-6 2.500-9 1.500V15H4v-3.500l-2-1z" fill="#e6162d" />
            <ellipse cx="6.800" cy="4" rx="1.200" ry="1.700" fill="#fff" />
            <ellipse cx="10.200" cy="4" rx="1.200" ry="1.700" fill="#fff" />
            <ellipse cx="8.500" cy="7" rx="3" ry="1" fill="#f6b21b" />
          </svg>
        </Slot>
        <Slot className="w-[30px]">
          <svg width="22" height="22" viewBox="0 0 22 22" fill="none" stroke="#1c1c1c" strokeWidth="1.400">
            <path d="M1 9c1-9 15-11 19-2M20 2v5.500h-5.500M8 20c-3-.5-5-2-6.500-5M1 20v-5.500h6" />
            <circle cx="16" cy="16.500" r="5.300" fill="#ff9b0b" stroke="none" />
          </svg>
        </Slot>
        <span className="ml-[10px] w-[49px] text-[19px] leading-none">英</span>
        <span className="w-[46px] text-[19px] leading-none">拼</span>
        <svg width="20" height="16" viewBox="0 0 20 16" fill="none" stroke="#1c1c1c" strokeWidth="1.400">
          <path d="M.7 6c5-6 13.600-6 18.600 0M3.500 9c4-4.500 9-4.500 13 0M6.300 12c2.500-3 4.900-3 7.400 0" />
          <circle cx="10" cy="14" r="1.700" fill="#1c1c1c" stroke="none" />
        </svg>
        <svg width="20" height="16" viewBox="0 0 20 16" fill="none" stroke="#1c1c1c" strokeWidth="1.300" className="ml-[10px]">
          <path d="M1 5.500h3.500L9 1.500v13l-4.500-4H1zM11.500 5.500q2 2.500 0 5" />
          <path d="M14 3.500q3.500 4.500 0 9M16.500 1.500q5 6.500 0 13" stroke="#a9a9a9" />
        </svg>
        <svg width="20" height="13" viewBox="0 0 20 13" className="ml-[10px]">
          <rect x="0.700" y="0.700" width="16" height="11.600" rx="2.500" fill="none" stroke="#1c1c1c" strokeWidth="1.400" />
          <path d="M3 3h8v7H3zM17.500 4.500h1q1.500 0 1.500 2t-1.500 2h-1z" fill="#1c1c1c" />
        </svg>
        <div className="ml-[20px] text-right text-[14px] leading-[20px]">
          <div>11:30</div>
          <div>2022/4/19</div>
        </div>
      </div>
    </div>
  );
}

function Gradients() {
  return (
    <svg width="0" height="0" className="absolute">
      <defs>
        <linearGradient id="gold" x1="0" y1="0" x2="1" y2="1">
          <stop offset="0" stopColor="#fff0b0" />
          <stop offset="0.500" stopColor="#ecc85f" />
          <stop offset="1" stopColor="#b8943e" />
        </linearGradient>
        <linearGradient id="fade" x1="0" y1="0" x2="0" y2="1">
          <stop offset="0" stopColor="#6fc0f8" />
          <stop offset="1" stopColor="#4a5566" />
        </linearGradient>
        <linearGradient id="red" x1="0" y1="0" x2="0.300" y2="1">
          <stop offset="0" stopColor="#e8262b" />
          <stop offset="0.600" stopColor="#c22328" />
          <stop offset="1" stopColor="#a3292d" />
        </linearGradient>
        <linearGradient id="win" x1="0" y1="0" x2="1" y2="1">
          <stop offset="0" stopColor="#4fc6fb" />
          <stop offset="1" stopColor="#0276d4" />
        </linearGradient>
        <linearGradient id="folder" x1="0" y1="0" x2="1" y2="1">
          <stop offset="0" stopColor="#ffdf77" />
          <stop offset="1" stopColor="#fdc026" />
        </linearGradient>
        <linearGradient id="sunball" x1="0" y1="0" x2="1" y2="1">
          <stop offset="0.200" stopColor="#ffd040" />
          <stop offset="1" stopColor="#f57c00" />
        </linearGradient>
        <linearGradient id="edgeA" x1="0" y1="0" x2="1" y2="0.500">
          <stop offset="0.200" stopColor="#1f9fdc" />
          <stop offset="0.700" stopColor="#35c6c9" />
          <stop offset="1" stopColor="#5fdc5a" />
        </linearGradient>
      </defs>
    </svg>
  );
}

export default function App() {
  return (
    <div className="flex h-[1080px] w-[1920px] flex-col overflow-hidden bg-[#222933] font-['Noto_Sans','Noto_Sans_CJK_SC',sans-serif]">
      <Gradients />
      <TitleBar />
      <FileTabs />
      <Toolbars />
      <Workspace />
      <CommandLine />
      <StatusBar />
      <Taskbar />
    </div>
  );
}
